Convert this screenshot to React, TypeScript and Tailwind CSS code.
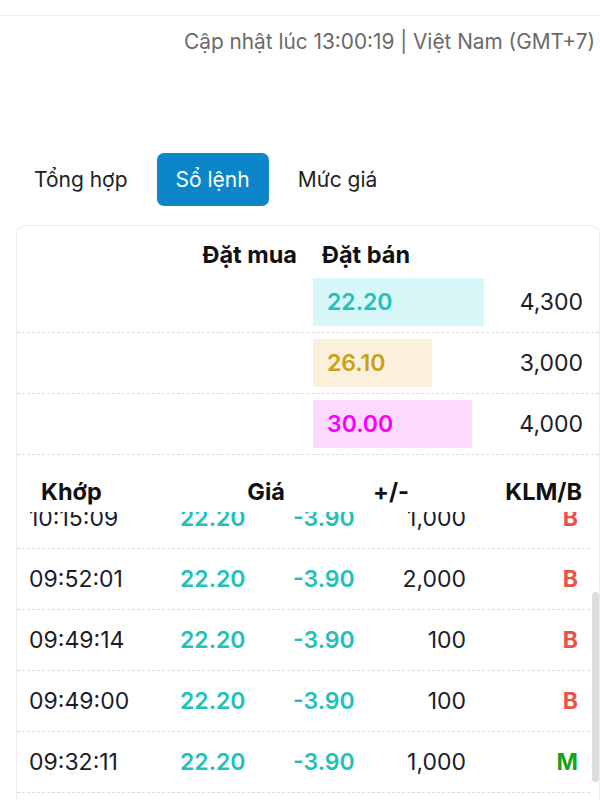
import React from 'react';

// --- Dữ liệu sổ lệnh ---

const asks = [
  { price: '22.20', vol: 4300, text: 'text-[#1fc1ba]', bg: 'bg-[#d7f6f7]' },
  { price: '26.10', vol: 3000, text: 'text-[#c9a114]', bg: 'bg-[#faf0db]' },
  { price: '30.00', vol: 4000, text: 'text-[#f700f7]', bg: 'bg-[#fdd9fd]' },
];

const maxVol = 4300;

const trades = [
  { time: '10:15:09', price: '22.20', change: '-3.90', vol: '1,000', side: 'B' },
  { time: '09:52:01', price: '22.20', change: '-3.90', vol: '2,000', side: 'B' },
  { time: '09:49:14', price: '22.20', change: '-3.90', vol: '100', side: 'B' },
  { time: '09:49:00', price: '22.20', change: '-3.90', vol: '100', side: 'B' },
  { time: '09:32:11', price: '22.20', change: '-3.90', vol: '1,000', side: 'M' },
  { time: '09:30:45', price: '22.20', change: '-3.90', vol: '500', side: 'B' },
];

const fmt = (n: number) => n.toLocaleString('en-US');

export default function App() {
  return (
    <div className="min-h-[800px] bg-white font-['Inter','Noto_Sans',sans-serif] text-[21px] leading-[28px] text-[#1c1c28] overflow-hidden">
      <div className="h-[16px] border-b border-[#efefef]" />

      <div className="mt-[12px] pr-[5px] text-right text-[20.8px] text-[#6a6a6a]">
        Cập nhật lúc 13:00:19 | Việt Nam (GMT+7)
      </div>

      {/* Tabs */}
      <div className="mt-[97px] flex gap-[10px] pl-[15px]">
        <div className="flex h-[53px] items-center px-[19px] text-[#222]">Tổng hợp</div>
        <div className="flex h-[53px] items-center rounded-[7px] bg-[#0b86c8] px-[19px] text-white">Sổ lệnh</div>
        <div className="flex h-[53px] items-center px-[19px] text-[#222]">Mức giá</div>
      </div>

      {/* Card */}
      <div className="ml-[16px] mt-[19px] rounded-t-[10px] border border-b-0 border-[#ececec] text-[23px]">
        <div className="flex h-[46px] pt-[15px] text-[23.5px] font-bold text-[#111]">
          <div className="w-[288px] pr-[8px] text-right">Đặt mua</div>
          <div className="ml-[8px] pl-[9px]">Đặt bán</div>
        </div>

        {asks.map((a) => (
          <div key={a.price} className="flex h-[61px] items-center border-b border-dashed border-[#dedede] pr-[16px]">
            <div className="w-[288px]" />
            <div
              className={`ml-[8px] flex h-[48px] items-center pl-[14px] font-semibold ${a.bg} ${a.text}`}
              style={{ width: Math.round((a.vol / maxVol) * 171) }}
            >
              {a.price}
            </div>
            <div className="ml-auto">{fmt(a.vol)}</div>
          </div>
        ))}

        {/* Khớp lệnh */}
        <div className="flex h-[57px] items-end pb-[6px] text-[23.5px] font-bold text-[#111]">
          <div className="flex w-[268px] justify-between pl-[24px]">
            <span>Khớp</span>
            <span>Giá</span>
          </div>
          <div className="ml-[88px]">+/-</div>
          <div className="ml-auto pr-[17px]">KLM/B</div>
        </div>

        <div className="flex h-[288px] overflow-hidden">
          <div className="flex-1 overflow-hidden">
            <div className="-mt-[24px]">
              {trades.map((t) => (
                <div key={t.time} className="flex h-[61px] items-center border-b border-dashed border-[#dedede]">
                  <div className="w-[163px] pl-[12px]">{t.time}</div>
                  <div className="w-[113px] font-semibold text-[#1fc1ba]">{t.price}</div>
                  <div className="w-[64px] whitespace-nowrap font-semibold text-[#1fc1ba]">{t.change}</div>
                  <div className="w-[109px] text-right">{t.vol}</div>
                  <div
                    className={`w-[112px] text-right font-bold ${t.side === 'B' ? 'text-[#ef4f47]' : 'text-[#17a317]'}`}
                  >
                    {t.side}
                  </div>
                </div>
              ))}
            </div>
          </div>
          {/* thanh cuộn */}
          <div className="w-[9px] pl-[2px]">
            <div className="mt-[80px] h-[190px] w-[7px] rounded-full bg-[#dcdcdc]" />
          </div>
        </div>
      </div>
    </div>
  );
}
